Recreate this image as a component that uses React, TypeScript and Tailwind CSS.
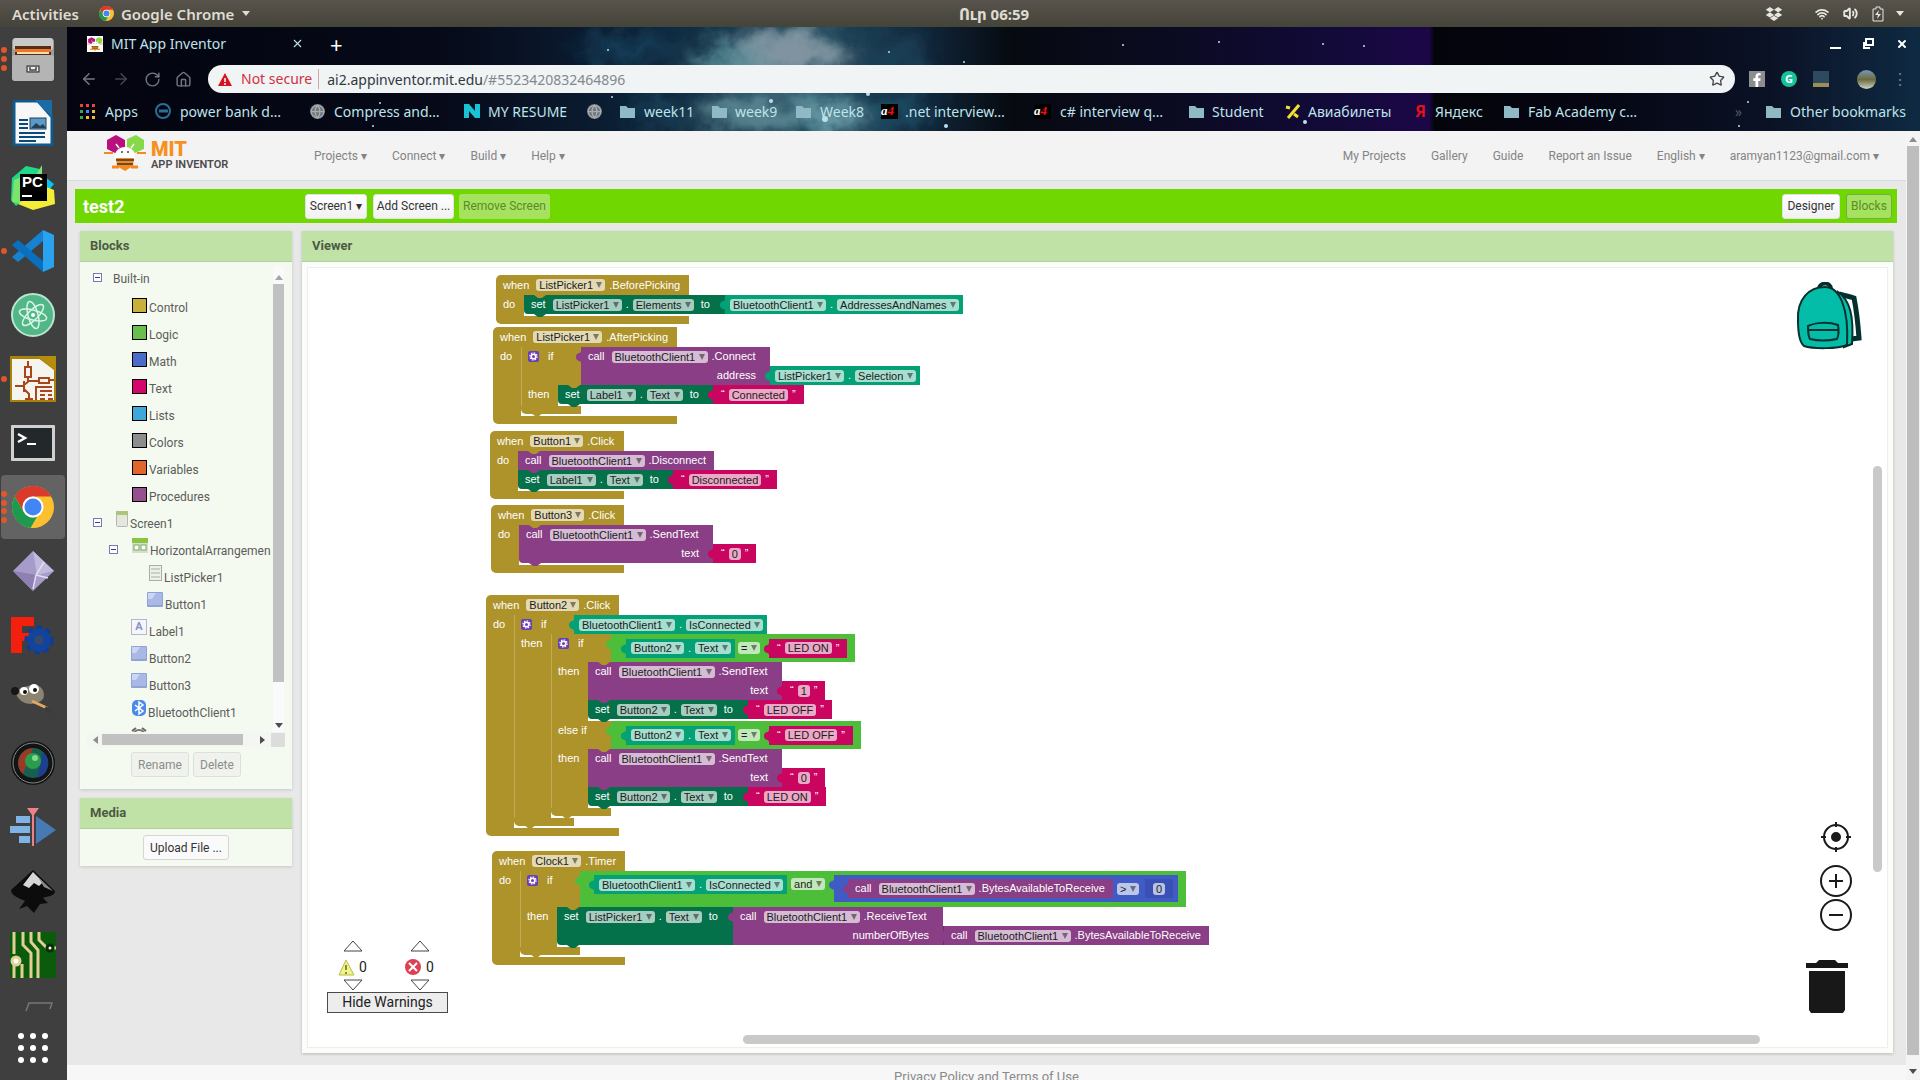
import React from 'react';
import { ArrowLeft, ArrowRight, Globe, House, RotateCw, Star, Volume2, Wifi, X } from 'lucide-react';
import { FaDropbox, FaFacebookF } from 'react-icons/fa';

/* ---------- block colours ---------- */

const tones = {
  gold: { bg: 'bg-[#ae932b]', text: 'text-[#ae932b]' },
  set: { bg: 'bg-[#04714a]', text: 'text-[#04714a]' },
  teal: { bg: 'bg-[#04a176]', text: 'text-[#04a176]' },
  purple: { bg: 'bg-[#893e85]', text: 'text-[#893e85]' },
  pink: { bg: 'bg-[#c9055f]', text: 'text-[#c9055f]' },
  green: { bg: 'bg-[#4dbe3a]', text: 'text-[#4dbe3a]' },
  blue: { bg: 'bg-[#405bc4]', text: 'text-[#405bc4]' },
};

type Tone = keyof typeof tones;

interface BoxProps {
  children?: React.ReactNode;
  className?: string;
}

/* ---------- block parts ---------- */

const Tab = ({ tone }: { tone: Tone }) => (
  <svg viewBox="0 0 5 12" className={`absolute -left-[5px] top-1 w-[5px] h-3 z-10 ${tones[tone].text}`}>
    <path d="M5 0v12C5 9 0 11 0 6s5-3 5-6z" fill="currentColor" />
  </svg>
);

const Notch = ({ tone, className = '' }: { tone: Tone; className?: string }) => (
  <svg viewBox="0 0 12 3" className={`absolute left-[10px] w-3 h-[3px] z-10 ${tones[tone].text} ${className}`}>
    <path d="M0 0h12L8 3H4z" fill="currentColor" />
  </svg>
);

const Word = ({ children, className = 'px-[7px]' }: BoxProps) => (
  <span className={`whitespace-nowrap ${className}`}>{children}</span>
);

const Pick = ({ value }: { value: string }) => (
  <span className="relative inline-flex shrink-0">
    <select
      aria-label={value}
      className="appearance-none h-3 pl-[3px] pr-3 leading-3 rounded-[3px] bg-white/65 text-[#1c1c1c]"
    >
      <option>{value}</option>
    </select>
    <svg viewBox="0 0 6 6" className="absolute right-[3px] top-[3px] w-[6px] h-[6px] pointer-events-none text-black/45">
      <path d="M0 0h6L3 6z" fill="currentColor" />
    </svg>
  </span>
);

const Prop = ({ of, name }: { of: string; name: string }) => (
  <>
    <Pick value={of} />
    <Word className="px-1">.</Word>
    <Pick value={name} />
  </>
);

const Value = ({ tone, children, className = 'h-[19px] items-center' }: BoxProps & { tone: Tone }) => (
  <div className={`relative flex shrink-0 ${tones[tone].bg} ${className}`}>
    <Tab tone={tone} />
    {children}
  </div>
);

const Getter = ({ of, name }: { of: string; name: string }) => (
  <Value tone="teal" className="h-[19px] items-center pl-[5px] pr-1">
    <Prop of={of} name={name} />
  </Value>
);

const Quoted = ({ value }: { value: string }) => (
  <Value tone="pink" className="h-[19px] items-center px-2 gap-1">
    <span>“</span>
    <input
      aria-label="text value"
      defaultValue={value}
      className="field-sizing-content h-3 px-[3px] leading-3 rounded-[3px] bg-white/65 text-[#1c1c1c]"
    />
    <span>”</span>
  </Value>
);

interface CallProps {
  of: string;
  method: string;
  arg?: string;
  className: string;
  children?: React.ReactNode;
  plug?: boolean;
  last?: boolean;
}

const Call = ({ of, method, arg, className, children, plug, last }: CallProps) => (
  <div className="flex items-end shrink-0">
    <div className={`relative bg-[#893e85] ${last ? 'rounded-bl-[4px]' : ''} ${className}`}>
      {plug ? <Tab tone="purple" /> : <Notch tone="purple" className="-bottom-[3px]" />}
      <div className="flex items-center h-[19px]">
        <Word>call</Word>
        <Pick value={of} />
        <Word className="pl-1">.{method}</Word>
      </div>
      {arg && <div className="flex items-center justify-end h-[19px] pr-[14px]">{arg}</div>}
    </div>
    {children}
  </div>
);

interface SetterProps extends BoxProps {
  of: string;
  name: string;
  last?: boolean;
}

const Setter = ({ of, name, children, className = '', last = true }: SetterProps) => (
  <div className="flex">
    <div className={`relative bg-[#04714a] ${last ? 'rounded-bl-[4px]' : ''} ${className}`}>
      <Notch tone="set" className="-bottom-[3px]" />
      <div className="flex items-center h-[19px]">
        <Word>set</Word>
        <Prop of={of} name={name} />
        <Word>to</Word>
      </div>
    </div>
    {children}
  </div>
);

const Gear = () => (
  <svg viewBox="0 0 11 11" className="w-[11px] h-[11px] shrink-0">
    <rect width="11" height="11" rx="2" fill="#6a3fb5" />
    <circle cx="5.500" cy="5.500" r="3.600" fill="none" stroke="#fff" strokeWidth="1.200" strokeDasharray="1.500 1.300" />
    <circle cx="5.500" cy="5.500" r="2.300" fill="none" stroke="#fff" strokeWidth="1.600" />
  </svg>
);

// one "if / else if" line together with its "then" statements
const Branch = ({ test, first, children }: BoxProps & { test: React.ReactNode; first?: boolean }) => (
  <>
    <div className="flex">
      <div className="w-[60px] bg-[#ae932b] border-l border-[#c3ac55]">
        <div className="flex items-center h-[19px] pl-[6px]">
          {first && <Gear />}
          <Word className={first ? 'pl-[9px]' : ''}>{first ? 'if' : 'else if'}</Word>
        </div>
      </div>
      {test}
    </div>
    <div className="flex">
      <div className="w-[37px] shrink-0 bg-[#ae932b] border-l border-[#c3ac55] pl-[6px] leading-[19px]">then</div>
      <div className="relative pb-[2px]">
        <Notch tone="gold" className="top-0" />
        {children}
      </div>
    </div>
  </>
);

const If = ({ children, foot = 'w-[60px]' }: BoxProps & { foot?: string }) => (
  <div>
    {children}
    <div className={`relative h-2 rounded-bl-[5px] bg-[#ae932b] ${foot}`}>
      <Notch tone="gold" className="-bottom-[2px]" />
    </div>
  </div>
);

interface WhenProps {
  of: string;
  event: string;
  place: string;
  width: string;
  children: React.ReactNode;
}

const When = ({ of, event, place, width, children }: WhenProps) => (
  <div className={`absolute text-[11px] text-white font-['Liberation_Sans',sans-serif] ${place}`}>
    <div className={`flex items-center h-5 rounded-tl-[5px] bg-[#ae932b] ${width}`}>
      <Word>when</Word>
      <Pick value={of} />
      <Word className="pl-1">.{event}</Word>
    </div>
    <div className="flex">
      <div className="w-7 shrink-0 bg-[#ae932b] pl-[7px] leading-[19px]">do</div>
      <div className="relative pb-[2px]">
        <Notch tone="gold" className="top-0" />
        {children}
      </div>
    </div>
    <div className={`h-2 rounded-bl-[5px] bg-[#ae932b] ${width}`} />
  </div>
);

const Compare = ({ value }: { value: string }) => (
  <Value tone="green" className="h-7 items-center pl-[15px] pr-2">
    <Getter of="Button2" name="Text" />
    <span className="pl-[3px] pr-[9px] flex">
      <Pick value="=" />
    </span>
    <Quoted value={value} />
  </Value>
);

const SendAndLabel = ({ send, label }: { send: string; label: string }) => (
  <>
    <Call of="BluetoothClient1" method="SendText" arg="text" className="w-[194px]">
      <Quoted value={send} />
    </Call>
    <Setter of="Button2" name="Text" className="w-[160px]">
      <Quoted value={label} />
    </Setter>
  </>
);

const Program = () => (
  <>
    <When of="ListPicker1" event="BeforePicking" place="left-[188px] top-[7px]" width="w-[193px]">
      <Setter of="ListPicker1" name="Elements" className="w-[201px]">
        <Getter of="BluetoothClient1" name="AddressesAndNames" />
      </Setter>
    </When>

    <When of="ListPicker1" event="AfterPicking" place="left-[185px] top-[59px]" width="w-[184px]">
      <If>
        <Branch
          first
          test={
            <Call of="BluetoothClient1" method="Connect" arg="address" className="w-[189px]" plug>
              <Getter of="ListPicker1" name="Selection" />
            </Call>
          }
        >
          <Setter of="Label1" name="Text" className="w-[155px]">
            <Quoted value="Connected" />
          </Setter>
        </Branch>
      </If>
    </When>

    <When of="Button1" event="Click" place="left-[182px] top-[163px]" width="w-[134px]">
      <Call of="BluetoothClient1" method="Disconnect" className="w-[196px]" />
      <Setter of="Label1" name="Text" className="w-[155px]">
        <Quoted value="Disconnected" />
      </Setter>
    </When>

    <When of="Button3" event="Click" place="left-[183px] top-[237px]" width="w-[133px]">
      <Call of="BluetoothClient1" method="SendText" arg="text" className="w-[194px]" last>
        <Quoted value="0" />
      </Call>
    </When>

    <When of="Button2" event="Click" place="left-[178px] top-[327px]" width="w-[133px]">
      <If>
        <Branch first test={<Getter of="BluetoothClient1" name="IsConnected" />}>
          <If>
            <Branch first test={<Compare value="LED ON" />}>
              <SendAndLabel send="1" label="LED OFF" />
            </Branch>
            <Branch test={<Compare value="LED OFF" />}>
              <SendAndLabel send="0" label="LED ON" />
            </Branch>
          </If>
        </Branch>
      </If>
    </When>

    <When of="Clock1" event="Timer" place="left-[184px] top-[583px]" width="w-[133px]">
      <If>
        <Branch
          first
          test={
            <Value tone="green" className="h-9 items-start pl-[14px] pr-2 pt-1">
              <Getter of="BluetoothClient1" name="IsConnected" />
              <span className="pl-1 pr-[9px] pt-[3px] flex">
                <Pick value="and" />
              </span>
              <Value tone="blue" className="h-[27px] items-center pl-[14px] pr-[5px]">
                <Call of="BluetoothClient1" method="BytesAvailableToReceive" className="w-[265px]" plug />
                <span className="pl-1 pr-[6px] flex">
                  <Pick value=">" />
                </span>
                <div className="flex items-center h-[19px] px-2 bg-[#3951b5]">
                  <input
                    aria-label="number"
                    defaultValue="0"
                    className="field-sizing-content h-3 px-[3px] leading-3 rounded-[3px] bg-white/65 text-[#1c1c1c]"
                  />
                </div>
              </Value>
            </Value>
          }
        >
          <Setter of="ListPicker1" name="Text" className="w-[176px]">
            <Call of="BluetoothClient1" method="ReceiveText" arg="numberOfBytes" className="w-[210px]" plug>
              <div className="border-l border-[#6d2c6b]">
                <Call of="BluetoothClient1" method="BytesAvailableToReceive" className="w-[265px]" plug />
              </div>
            </Call>
          </Setter>
        </Branch>
      </If>
    </When>
  </>
);

/* ---------- desktop ---------- */

const ChromeLogo = ({ className }: { className: string }) => (
  <svg viewBox="0 0 42 42" className={className}>
    <circle cx="21" cy="21" r="21" fill="#fbc02d" />
    <path d="M2.800 10.500A21 21 0 0 1 39.200 10.500H21A10.500 10.500 0 0 0 11.900 26.200z" fill="#d93a2b" />
    <path d="M2.800 10.500L11.900 26.200A10.500 10.500 0 0 0 25 30.700L18.500 41.900A21 21 0 0 1 2.800 10.500z" fill="#1e9a50" />
    <circle cx="21" cy="21" r="10.500" fill="#fff" />
    <circle cx="21" cy="21" r="8.500" fill="#4285f4" />
  </svg>
);

const dockIcons: { name: string; dots?: number; active?: boolean; art: React.ReactNode }[] = [
  {
    name: 'Files',
    dots: 3,
    art: (
      <>
        <rect x="2" y="2" width="42" height="43" rx="4" fill="#9d9d9d" />
        <rect x="3" y="2" width="40" height="12" rx="3" fill="#c9c9c9" />
        <rect x="5" y="10" width="36" height="9" fill="#5a2c12" />
        <rect x="5" y="13" width="36" height="3" fill="#e8782e" />
        <rect x="7" y="16" width="32" height="2" fill="#fbdcae" />
        <rect x="2" y="19" width="42" height="26" rx="3" fill="#b4b4b4" />
        <rect x="16" y="29" width="14" height="8" fill="#eee" />
        <path d="M17 30h12v6H17zM20 31v3h6v-3" fill="none" stroke="#444" strokeWidth="1.500" />
      </>
    ),
  },
  {
    name: 'LibreOffice Writer',
    art: (
      <>
        <path d="M4 1h24l14 16v28H4z" fill="#f7f7f7" stroke="#0d5a8c" strokeWidth="3" />
        <path d="M25 0h17v17z" fill="#1b6ca5" />
        <path d="M9 20h9M9 24h9M9 28h9M9 33h26M9 37h26M9 41h17" stroke="#0b4a78" strokeWidth="2" />
        <rect x="20" y="18" width="16" height="11" fill="#5b9bc7" stroke="#23405a" />
        <path d="M21 28l5-5 4 3 3-2 3 4z" fill="#23405a" />
      </>
    ),
  },
  {
    name: 'PyCharm',
    art: (
      <>
        <path d="M2 14L16 2l14 3-8 24L6 42 1 36z" fill="#21d789" />
        <path d="M32 1v12l-9 3zM4 16l10-4v28l-12-2z" fill="#7de36a" />
        <path d="M34 12l10 8-8 10z" fill="#07c3f2" />
        <path d="M34 22l10 4 1 14-22 6-15-6z" fill="#f5ec37" />
        <rect x="10" y="10" width="27" height="27" fill="#000" />
        <text x="12" y="23" fill="#fff" fontSize="15" fontWeight="bold" fontFamily="Liberation Sans, sans-serif">
          PC
        </text>
        <rect x="12" y="31" width="10" height="2" fill="#fff" />
      </>
    ),
  },
  {
    name: 'Visual Studio Code',
    dots: 1,
    art: (
      <>
        <path d="M33 2l11 5v32l-11 5z" fill="#29a3f0" />
        <path d="M33 2v11L8 34l-6-5z" fill="#1583d2" />
        <path d="M33 44V33L8 12l-6 5z" fill="#0a6fbd" />
      </>
    ),
  },
  {
    name: 'Atom',
    art: (
      <>
        <circle cx="23" cy="23" r="21" fill="#52b788" stroke="#b9e6cf" strokeWidth="2" />
        <g fill="none" stroke="#d9f5e6" strokeWidth="1.500">
          <ellipse cx="23" cy="23" rx="14" ry="5" transform="rotate(15 23 23)" />
          <ellipse cx="23" cy="23" rx="14" ry="5" transform="rotate(75 23 23)" />
          <ellipse cx="23" cy="23" rx="14" ry="5" transform="rotate(135 23 23)" />
        </g>
        <circle cx="23" cy="23" r="2" fill="#fff" />
      </>
    ),
  },
  {
    name: 'KiCad Eeschema',
    dots: 1,
    art: (
      <>
        <path d="M0 1h30l16 12v33H0z" fill="#f6f4ee" stroke="#a98208" strokeWidth="4" />
        <path d="M28 0h18v16z" fill="#b48d0b" />
        <g fill="none" stroke="#a8471c" strokeWidth="2">
          <path d="M18 5v6M15 11h6v10h-6zM18 21v4h10M29 22h10v5H29zM39 24h5M5 30h9M14 25v11M14 29l5-4M14 33l5 5v5M15 43h8M26 44V31h16M30 35h12M30 39h5M38 39h4M30 43h5M38 43h5" />
        </g>
      </>
    ),
  },
  {
    name: 'Terminal',
    art: (
      <>
        <rect x="1" y="5" width="44" height="36" rx="1" fill="#d0d0d0" />
        <rect x="4" y="8" width="38" height="30" fill="#23282a" />
        <path d="M8 14l7 4-7 4" fill="none" stroke="#fff" strokeWidth="2.500" />
        <rect x="17" y="23" width="9" height="2" fill="#fff" />
      </>
    ),
  },
  { name: 'Google Chrome', dots: 4, active: true, art: null },
  {
    name: 'Prism',
    art: (
      <>
        <path d="M23 3l21 20-21 20L3 23z" fill="#a79bc9" />
        <path d="M23 3l21 20-17 4z" fill="#c2b9de" />
        <path d="M3 23l24 4-4 16z" fill="#8f80b4" />
        <path d="M34 14l-8 13-3 14M26 27l12 3" fill="none" stroke="#e4def2" strokeWidth="1.500" />
      </>
    ),
  },
  {
    name: 'FreeCAD',
    art: (
      <>
        <path d="M1 5h23v9H12v7h9v8h-9v12H1z" fill="#f2200c" />
        <circle cx="29" cy="28" r="12" fill="none" stroke="#0d3c9b" strokeWidth="5" strokeDasharray="5 4" />
        <circle cx="29" cy="28" r="8" fill="#3a4a66" stroke="#12439f" strokeWidth="7" />
      </>
    ),
  },
  {
    name: 'GIMP',
    art: (
      <>
        <path d="M4 12c6 4 10-3 20-3 8 0 12 8 9 14-5 6-20 8-26-3z" fill="#8a8471" />
        <circle cx="5" cy="15" r="4" fill="#161616" />
        <circle cx="14" cy="15" r="4" fill="#fff" />
        <circle cx="24" cy="13" r="5" fill="#fff" />
        <circle cx="15" cy="16" r="2" fill="#111" />
        <circle cx="25" cy="14" r="2" fill="#111" />
        <path d="M22 25l15 7" stroke="#e0a864" strokeWidth="3" />
        <path d="M36 30l7 8-9-4z" fill="#3b3b3b" />
      </>
    ),
  },
  {
    name: 'Camera',
    art: (
      <>
        <circle cx="23" cy="23" r="22" fill="#141414" />
        <circle cx="23" cy="23" r="20" fill="none" stroke="#7d8a8a" />
        <circle cx="23" cy="23" r="15" fill="#17604f" />
        <path d="M23 8a15 15 0 0 0-10 26z" fill="#9c3826" />
        <path d="M33 12a15 15 0 0 1-6 26z" fill="#1d3f8f" />
        <circle cx="23" cy="21" r="8" fill="#2b9c4c" />
        <circle cx="25" cy="18" r="3" fill="#7fd98c" />
      </>
    ),
  },
  {
    name: 'Kdenlive',
    art: (
      <>
        <path d="M6 12h14v7H6zM0 22h20v7H0zM9 32h11v7H9z" fill="#7fb2e5" />
        <path d="M26 12l20 14-20 14z" fill="#457ab5" />
        <path d="M17 4h12l-5 7v31h-2V11z" fill="#ee8287" />
      </>
    ),
  },
  {
    name: 'Inkscape',
    art: (
      <>
        <path d="M23 2l22 21c0 6-9 5-12 7l5 5-8 1-6 9-7-7-8 3 6-8C8 30 1 27 1 22z" fill="#0c0c0c" />
        <path d="M23 4l10 10-4 4-5-3-5 5-6-3z" fill="#d4d6d8" />
        <path d="M28 9l15 14-9-4z" fill="#8a8d90" />
      </>
    ),
  },
  {
    name: 'KiCad Pcbnew',
    art: (
      <>
        <rect width="46" height="46" fill="#0a5c0c" />
        <g fill="none" stroke="#e3cf96" strokeWidth="3">
          <path d="M4 0v22M4 30v16M13 0v13l8 8v25M21 0v10l7 8v28M29 0v8l8 8h9M12 46V32" />
        </g>
        <circle cx="6" cy="29" r="4" fill="#fff" stroke="#e3cf96" strokeWidth="3" />
        <circle cx="40" cy="16" r="3" fill="#fff" stroke="#0b2e0b" strokeWidth="3" />
      </>
    ),
  },
];

const dotLayouts = ['', 'h-[6px]', 'h-3', 'h-6', 'h-8'];

const Dock = () => (
  <nav aria-label="Dock" className="w-[67px] shrink-0 bg-[#3f3f3f] flex flex-col items-center overflow-hidden pr-px">
    {dockIcons.map(({ name, dots = 0, active, art }) => (
      <button
        key={name}
        aria-label={name}
        className={`relative w-16 h-16 shrink-0 flex items-center justify-center rounded ${active ? 'bg-[#636363]' : ''}`}
      >
        <span className={`absolute left-0 flex flex-col justify-between ${dotLayouts[dots]}`}>
          {Array.from({ length: dots }, (_, i) => (
            <span key={i} className="w-[6px] h-[6px] rounded-full bg-[#e2562c]" />
          ))}
        </span>
        {art ? (
          <svg viewBox="0 0 46 46" className="w-[46px] h-[46px]">
            {art}
          </svg>
        ) : (
          <ChromeLogo className="w-[42px] h-[42px]" />
        )}
      </button>
    ))}
    <svg viewBox="0 0 28 10" className="w-7 h-[10px] mt-[14px] ml-3 shrink-0">
      <path d="M1 10L4 2h23l-2 6" fill="none" stroke="#777" strokeWidth="1.500" />
    </svg>
    <button aria-label="Show applications" className="grid grid-cols-3 gap-[6px] mt-[22px]">
      {Array.from({ length: 9 }, (_, i) => (
        <span key={i} className="w-[6px] h-[6px] rounded-full bg-white" />
      ))}
    </button>
  </nav>
);

const TopBar = () => (
  <header className="h-[27px] shrink-0 grid grid-cols-3 items-center px-3 bg-linear-to-b from-[#58534c] to-[#454439] text-[#dfdbd2] text-[15px] leading-5 font-semibold font-['Noto_Sans','DejaVu_Sans',sans-serif]">
    <div className="flex items-center">
      <button className="mr-5">Activities</button>
      <ChromeLogo className="w-[15px] h-[15px] mr-[7px]" />
      <button className="flex items-center">
        Google Chrome
        <span className="ml-2 border-x-4 border-t-[5px] border-x-transparent border-t-[#dfdbd2]" />
      </button>
    </div>
    <button className="justify-self-center pl-[68px] font-bold">Ուր 06:59</button>
    <div className="flex items-center justify-end pr-1 text-[#e8e6e0]">
      <FaDropbox className="w-[18px] h-4 mr-8" />
      <Wifi className="w-[14px] h-[14px] mr-[14px]" strokeWidth={3} />
      <Volume2 className="w-[15px] h-[15px] mr-[14px]" strokeWidth={3} />
      <svg viewBox="0 0 12 16" className="w-3 h-4 mr-3">
        <path d="M1 3h3V1h4v2h3v12H1z" fill="none" stroke="currentColor" />
        <path d="M7 4L3 9h3l-1 4 4-5H6z" fill="currentColor" />
      </svg>
      <span className="border-x-4 border-t-[5px] border-x-transparent border-t-[#e8e6e0]" />
    </div>
  </header>
);

/* ---------- browser ---------- */

const Nebula = () => (
  <svg viewBox="0 0 1853 104" preserveAspectRatio="none" className="absolute inset-0 w-full h-full">
    <defs>
      <linearGradient id="sky">
        <stop offset="0" stopColor="#03040f" />
        <stop offset="0.200" stopColor="#060918" />
        <stop offset="0.310" stopColor="#0c2137" />
        <stop offset="0.400" stopColor="#1d4a5e" />
        <stop offset="0.460" stopColor="#12283d" />
        <stop offset="0.510" stopColor="#060a10" />
        <stop offset="0.600" stopColor="#0b0b22" />
        <stop offset="0.680" stopColor="#120a38" />
        <stop offset="0.735" stopColor="#1c0747" />
        <stop offset="0.738" stopColor="#04040b" />
        <stop offset="0.820" stopColor="#050612" />
        <stop offset="0.920" stopColor="#0b1226" />
        <stop offset="1" stopColor="#0e2a42" />
      </linearGradient>
      <filter id="haze" x="-50%" y="-50%" width="200%" height="200%">
        <feGaussianBlur stdDeviation="11" result="soft" />
        <feTurbulence type="fractalNoise" baseFrequency="0.040" numOctaves="4" seed="7" />
        <feDisplacementMap in="soft" scale="40" xChannelSelector="R" yChannelSelector="G" />
      </filter>
    </defs>
    <rect width="1853" height="104" fill="url(#sky)" />
    <g filter="url(#haze)">
      <ellipse cx="720" cy="27" rx="62" ry="24" fill="#8296a2" />
      <ellipse cx="660" cy="36" rx="38" ry="13" fill="#5f97a0" />
      <ellipse cx="690" cy="86" rx="60" ry="18" fill="#5b8793" />
      <ellipse cx="770" cy="88" rx="36" ry="18" fill="#6fa3ad" />
      <ellipse cx="560" cy="20" rx="50" ry="14" fill="#17405a" />
      <ellipse cx="590" cy="84" rx="30" ry="10" fill="#1c4a60" />
      <ellipse cx="825" cy="30" rx="40" ry="14" fill="#1b4358" />
      <ellipse cx="820" cy="86" rx="45" ry="14" fill="#1c5068" />
    </g>
    <g fill="#b9e0ee">
      <circle cx="862" cy="40" r="2" />
      <circle cx="897" cy="35" r="1" />
      <circle cx="822" cy="25" r="1" />
      <circle cx="881" cy="55" r="1" />
      <circle cx="879" cy="99" r="2" />
      <circle cx="801" cy="67" r="2" />
      <circle cx="758" cy="92" r="3" />
      <circle cx="704" cy="74" r="2" />
      <circle cx="1056" cy="18" r="1" />
      <circle cx="1152" cy="15" r="1" />
      <circle cx="1256" cy="17" r="1" />
      <circle cx="1297" cy="19" r="1" />
      <circle cx="1238" cy="95" r="2" />
      <circle cx="1672" cy="99" r="1" />
      <circle cx="1681" cy="75" r="1" />
      <circle cx="306" cy="99" r="1" />
      <circle cx="313" cy="76" r="1" />
      <circle cx="541" cy="23" r="1" />
      <circle cx="545" cy="70" r="1" />
    </g>
  </svg>
);

const Folder = () => (
  <svg viewBox="0 0 15 13" className="w-[15px] h-[13px]">
    <path d="M0 1h6l2 2h7v10H0z" fill="#8fb9c4" />
  </svg>
);

const Earth = () => (
  <span className="w-[15px] h-[15px] rounded-full bg-[#70777c] flex">
    <Globe className="w-[15px] h-[15px] text-[#a5adb1]" strokeWidth={2} />
  </span>
);

const A4 = () => (
  <span className="w-[17px] h-[15px] bg-black text-white text-[13px] leading-[14px] font-bold italic font-['Liberation_Serif',serif]">
    a<span className="text-[#ee1111]">4</span>
  </span>
);

const AppsGrid = () => (
  <svg viewBox="0 0 15 15" className="w-[15px] h-[15px]">
    {['#e8453c', '#e8453c', '#e8453c', '#39a852', '#4285f4', '#f9bb2d', '#39a852', '#f9bb2d', '#f9bb2d'].map((c, i) => (
      <rect key={i} x={(i % 3) * 6} y={Math.floor(i / 3) * 6} width="3" height="3" fill={c} />
    ))}
  </svg>
);

const bookmarks: { label: string; width: string; gap: string; icon: React.ReactNode }[] = [
  { label: 'Apps', width: 'w-[75px]', gap: 'gap-[10px]', icon: <AppsGrid /> },
  {
    label: 'power bank d…',
    width: 'w-[155px]',
    gap: 'gap-2',
    icon: (
      <svg viewBox="0 0 17 17" className="w-[17px] h-[17px]">
        <circle cx="8" cy="8" r="7" fill="none" stroke="#2a6f95" strokeWidth="2" />
        <path d="M4 8h9" stroke="#2a6f95" strokeWidth="3" />
      </svg>
    ),
  },
  { label: 'Compress and…', width: 'w-[154px]', gap: 'gap-[9px]', icon: <Earth /> },
  {
    label: 'MY RESUME',
    width: 'w-[123px]',
    gap: 'gap-2',
    icon: (
      <svg viewBox="0 0 16 14" className="w-4 h-[14px]">
        <path d="M0 14V0h5l6 7V0h5v14h-5L5 7v7z" fill="#19c3d6" />
      </svg>
    ),
  },
  { label: '', width: 'w-[33px]', gap: '', icon: <Earth /> },
  { label: 'week11', width: 'w-[92px]', gap: 'gap-[9px]', icon: <Folder /> },
  { label: 'week9', width: 'w-[84px]', gap: 'gap-2', icon: <Folder /> },
  { label: 'Week8', width: 'w-[85px]', gap: 'gap-[9px]', icon: <Folder /> },
  { label: '.net interview…', width: 'w-[153px]', gap: 'gap-[7px]', icon: <A4 /> },
  { label: 'c# interview q…', width: 'w-[155px]', gap: 'gap-[9px]', icon: <A4 /> },
  { label: 'Student', width: 'w-[96px]', gap: 'gap-2', icon: <Folder /> },
  {
    label: 'Авиабилеты',
    width: 'w-[130px]',
    gap: 'gap-2',
    icon: (
      <svg viewBox="0 0 15 15" className="w-[15px] h-[15px]">
        <path d="M1 3l4 1M3 14L14 1M9 10l4 3" stroke="#f0e030" strokeWidth="3" />
      </svg>
    ),
  },
  {
    label: 'Яндекс',
    width: 'w-[89px]',
    gap: 'gap-[10px]',
    icon: <span className="w-[10px] text-[16px] font-bold text-[#e0101c]">Я</span>,
  },
  { label: 'Fab Academy c…', width: 'w-[150px]', gap: 'gap-[9px]', icon: <Folder /> },
];

const AppLogo = ({ className }: { className: string }) => (
  <svg viewBox="0 0 42 36" className={className}>
    <path d="M3 5L12 0l9 5v9l-8 5-10-5z" fill="#b8107d" />
    <path d="M23 4l9-4 8 5v9l-9 4-8-4z" fill="#88d94a" />
    <path d="M0 18h9M33 18h9" stroke="#f28a1c" strokeWidth="2" />
    <path d="M15 13l-3-4M27 13l3-4" stroke="#fff" strokeWidth="1.500" />
    <path d="M12 22h18l-1 9-8 5-8-5z" fill="#f28a1c" />
    <path d="M8 32h7M27 32h7" stroke="#f28a1c" strokeWidth="3" />
    <path d="M12 25h18M13 29h16" stroke="#6b4a34" strokeWidth="2" />
    <path d="M11 23c-1-7 4-11 10-11s11 4 10 11z" fill="#fff" />
    <circle cx="18" cy="17" r="1" fill="#444" />
    <circle cx="24" cy="17" r="1" fill="#444" />
  </svg>
);

const Browser = () => (
  <div className="relative h-[104px] shrink-0 bg-[#05060f] text-[#bfe3ec] text-[14px] font-['Noto_Sans',sans-serif]">
    <Nebula />
    <div className="relative flex flex-col h-full">
      <div className="h-[38px] flex items-center pl-5 pb-[5px]">
        <span className="w-4 h-4 mr-2 bg-white flex items-center justify-center">
          <AppLogo className="w-4 h-[14px]" />
        </span>
        <span className="w-[180px]">MIT App Inventor</span>
        <button aria-label="Close tab">
          <X className="w-[13px] h-[13px]" />
        </button>
        <button aria-label="New tab" className="ml-[26px] text-[22px] leading-none text-white">
          +
        </button>
        <div className="ml-auto flex items-center gap-[22px] pr-3 text-white">
          <button aria-label="Minimize" className="w-[11px] h-[2px] mt-2 bg-white" />
          <button aria-label="Restore">
            <svg viewBox="0 0 11 11" className="w-[11px] h-[11px]">
              <path d="M3 1h7v6H3zM1 4v6h6" fill="none" stroke="currentColor" strokeWidth="2" />
            </svg>
          </button>
          <button aria-label="Close window">
            <X className="w-3 h-3" strokeWidth={4} />
          </button>
        </div>
      </div>
      <div className="h-7 flex items-center pl-[13px] pr-3">
        <div className="flex items-center gap-[14px] text-[#75787f] mr-4">
          <ArrowLeft className="w-[18px] h-[18px]" />
          <ArrowRight className="w-[18px] h-[18px] text-[#43464d]" />
          <RotateCw className="w-[17px] h-[17px]" />
          <House className="w-[17px] h-[17px]" />
        </div>
        <div className="flex-1 h-7 rounded-full bg-[#f0f4f5] flex items-center pl-[10px] pr-[10px]">
          <svg viewBox="0 0 14 13" className="w-[14px] h-[13px] mr-[9px]">
            <path d="M7 0l7 13H0z" fill="#d6121f" />
            <path d="M7 5v4M7 10v2" stroke="#fff" strokeWidth="1.500" />
          </svg>
          <span className="text-[#d23040] pr-[6px] mr-2 border-r border-[#d9a5aa] leading-5">Not secure</span>
          <label className="relative flex-1 flex">
            <span className="text-[#33383d]">
              ai2.appinventor.mit.edu<span className="text-[#83888d]">/#5523420832464896</span>
            </span>
            <input
              aria-label="Address"
              defaultValue="ai2.appinventor.mit.edu/#5523420832464896"
              className="absolute inset-0 w-full bg-transparent text-transparent"
            />
          </label>
          <Star className="w-4 h-4 text-[#444]" />
        </div>
        <span className="ml-[14px] w-4 h-4 bg-[#8d8d90] flex items-end justify-center text-white">
          <FaFacebookF className="w-3 h-[14px]" />
        </span>
        <span className="ml-4 w-4 h-4 rounded-full bg-[#14c39a] text-white text-[11px] leading-4 text-center font-bold">G</span>
        <span className="ml-4 w-4 h-4 bg-[#2d4a60] border-b-4 border-[#9c8e50]" />
        <span className="ml-7 w-[19px] h-[19px] rounded-full bg-linear-to-b from-[#7a95b8] via-[#6c6c3a] to-[#cfd6d0]" />
        <button aria-label="Menu" className="ml-4 text-[16px] leading-none text-[#777c85]">
          ⋮
        </button>
      </div>
      <div className="h-[38px] flex items-center pl-[13px] pr-[14px] pb-[2px]">
        {bookmarks.map(({ label, width, gap, icon }, i) => (
          <a key={i} href="#" aria-label={label || 'Bookmark'} className={`flex items-center shrink-0 whitespace-nowrap ${gap} ${width}`}>
            {icon}
            {label}
          </a>
        ))}
        <span className="ml-auto mr-6 text-[#4f5966]">»</span>
        <a href="#" className="flex items-center gap-[9px] whitespace-nowrap">
          <Folder />
          Other bookmarks
        </a>
      </div>
    </div>
  </div>
);

/* ---------- App Inventor page ---------- */

const button = 'h-[25px] rounded-[3px] text-[12px] whitespace-nowrap flex items-center justify-center';
const whiteButton = `${button} bg-linear-to-b from-white to-[#f1f1f1] text-[#333] border border-[#e2e2e2]`;

const PageHeader = () => (
  <header className="h-[50px] shrink-0 flex items-center bg-[#f3f3f3] border-b border-[#d5dbde] pl-[37px] pr-[27px] text-[12px] text-[#848484]">
    <AppLogo className="w-[42px] h-9 mb-[6px] mr-[5px]" />
    <div className="w-[163px]">
      <div className="text-[20px] leading-[18px] font-black text-[#f7901e]">MIT</div>
      <div className="text-[11px] leading-[14px] font-semibold text-[#4b4b4b]">APP INVENTOR</div>
    </div>
    <nav className="flex gap-[25px]">
      <button>Projects ▾</button>
      <button>Connect ▾</button>
      <button>Build ▾</button>
      <button>Help ▾</button>
    </nav>
    <nav className="flex gap-[25px] ml-auto">
      <a href="#">My Projects</a>
      <a href="#">Gallery</a>
      <a href="#">Guide</a>
      <a href="#">Report an Issue</a>
      <button>English ▾</button>
      <button>aramyan1123@gmail.com ▾</button>
    </nav>
  </header>
);

const ProjectBar = () => (
  <div className="h-[34px] shrink-0 flex items-center bg-[#70d800] pl-2 pr-[5px]">
    <h1 className="w-[222px] text-[18px] font-bold text-white">test2</h1>
    <button className={`${whiteButton} w-[62px]`}>Screen1 ▾</button>
    <button className={`${whiteButton} w-[81px] ml-[6px]`}>Add Screen ...</button>
    <button disabled className={`${button} w-[91px] ml-[5px] bg-[#a5e25e] text-[#5c8a2c]`}>
      Remove Screen
    </button>
    <button className={`${whiteButton} w-[58px] ml-auto`}>Designer</button>
    <button disabled className={`${button} w-[46px] ml-[6px] bg-[#a5e25e] border border-[#7aa84a] text-[#5c8a2c]`}>
      Blocks
    </button>
  </div>
);

const PanelTitle = ({ children }: BoxProps) => (
  <h2 className="h-[31px] shrink-0 flex items-center px-[10px] bg-[#c1e2a7] border-b border-[#b3cfa0] text-[13px] font-bold text-[#4c5a44]">
    {children}
  </h2>
);

const Minus = () => (
  <button aria-label="Collapse" className="w-[9px] h-[9px] mt-[7px] border border-[#7d78b5] bg-white flex items-center justify-center">
    <span className="w-[5px] h-px bg-[#3d378f]" />
  </button>
);

const swatch = 'w-[15px] h-[15px] mt-[3px] border border-black';

const ScreenIcon = () => (
  <svg viewBox="0 0 12 16" className="w-3 h-4">
    <rect x="0.500" y="0.500" width="11" height="15" rx="1" fill="#e4e6e0" stroke="#b5b9ae" />
    <rect width="12" height="4" fill="#a8c878" />
  </svg>
);
const ArrangementIcon = () => (
  <svg viewBox="0 0 16 16" className="w-4 h-4">
    <rect width="16" height="15" fill="#d5ded0" />
    <rect width="16" height="5" fill="#8bc53f" />
    <rect x="2" y="7" width="5" height="5" fill="#fff" stroke="#7da85a" />
    <rect x="9" y="7" width="5" height="5" fill="#fff" stroke="#7da85a" />
  </svg>
);
const ListIcon = () => (
  <svg viewBox="0 0 13 16" className="w-[13px] h-4">
    <rect x="0.500" y="0.500" width="12" height="15" fill="#eef1ea" stroke="#a9ada5" />
    <path d="M2 4h9M2 8h9M2 12h9" stroke="#a9ada5" />
  </svg>
);
const ButtonIcon = () => (
  <svg viewBox="0 0 16 15" className="w-4 h-[15px]">
    <rect width="16" height="15" rx="1" fill="#8fa3d6" />
    <rect x="1" y="1" width="14" height="12" fill="#a9b8e4" />
    <path d="M1 1h8L5 7H1z" fill="#ccd6f2" />
  </svg>
);
const LabelIcon = () => (
  <span className="w-4 h-4 border border-[#b4b8c8] bg-[#f4f6fc] text-[11px] leading-[14px] text-center font-bold text-[#8d90c4]">A</span>
);
const BluetoothIcon = () => (
  <svg viewBox="0 0 14 16" className="w-[14px] h-4">
    <rect width="14" height="16" rx="5" fill="#4a8ae8" />
    <path d="M3 5l8 6-4 3V2l4 3-8 6" fill="none" stroke="#fff" strokeWidth="1.500" />
  </svg>
);
const ClockIcon = () => (
  <svg viewBox="0 0 16 16" className="w-4 h-4">
    <circle cx="8" cy="9" r="6" fill="#fff" stroke="#777" strokeWidth="2" />
    <path d="M1 4l4-3M15 4l-4-3" stroke="#666" strokeWidth="2" />
  </svg>
);

const blockTree: { label: string; indent: string; icon?: React.ReactNode; open?: boolean }[] = [
  { label: 'Built-in', indent: 'pl-[13px]', open: true },
  { label: 'Control', indent: 'pl-[52px]', icon: <span className={`${swatch} bg-[#c9b03c]`} /> },
  { label: 'Logic', indent: 'pl-[52px]', icon: <span className={`${swatch} bg-[#68bf4c]`} /> },
  { label: 'Math', indent: 'pl-[52px]', icon: <span className={`${swatch} bg-[#4a6cc8]`} /> },
  { label: 'Text', indent: 'pl-[52px]', icon: <span className={`${swatch} bg-[#d4056c]`} /> },
  { label: 'Lists', indent: 'pl-[52px]', icon: <span className={`${swatch} bg-[#40a8d8]`} /> },
  { label: 'Colors', indent: 'pl-[52px]', icon: <span className={`${swatch} bg-[#8d8d8d]`} /> },
  { label: 'Variables', indent: 'pl-[52px]', icon: <span className={`${swatch} bg-[#e0662c]`} /> },
  { label: 'Procedures', indent: 'pl-[52px]', icon: <span className={`${swatch} bg-[#94508f]`} /> },
  { label: 'Screen1', indent: 'pl-[13px]', icon: <ScreenIcon />, open: true },
  { label: 'HorizontalArrangemen', indent: 'pl-[29px]', icon: <ArrangementIcon />, open: true },
  { label: 'ListPicker1', indent: 'pl-[69px]', icon: <ListIcon /> },
  { label: 'Button1', indent: 'pl-[67px]', icon: <ButtonIcon /> },
  { label: 'Label1', indent: 'pl-[51px]', icon: <LabelIcon /> },
  { label: 'Button2', indent: 'pl-[51px]', icon: <ButtonIcon /> },
  { label: 'Button3', indent: 'pl-[51px]', icon: <ButtonIcon /> },
  { label: 'BluetoothClient1', indent: 'pl-[52px]', icon: <BluetoothIcon /> },
  { label: '', indent: 'pl-[51px]', icon: <ClockIcon /> },
];

const Sidebar = () => (
  <aside className="w-[212px] shrink-0 flex flex-col gap-[9px]">
    <section className="bg-[#f4faef] shadow-[0_1px_3px_rgba(0,0,0,0.15)]">
      <PanelTitle>Blocks</PanelTitle>
      <div className="flex h-[470px]">
        <ul className="flex-1 min-w-0 overflow-hidden pt-1 text-[12px] text-[#5c5c5c]">
          {blockTree.map(({ label, indent, icon, open }) => (
            <li key={label} className={`flex items-start h-[27px] first:mb-[2px] leading-[27px] whitespace-nowrap ${indent}`}>
              {open && <Minus />}
              {open && <span className={icon ? 'w-[14px] shrink-0' : 'w-[11px] shrink-0'} />}
              {icon && <span className="mr-[2px] flex shrink-0">{icon}</span>}
              {label}
            </li>
          ))}
        </ul>
        <div className="w-[11px] mr-2 mt-1 bg-[#fafafa] flex flex-col items-center">
          <span className="mt-[9px] mb-1 border-x-4 border-b-[5px] border-x-transparent border-b-[#a5a5a5]" />
          <span className="w-full h-[398px] bg-[#c1c1c1]" />
          <span className="mt-auto mb-1 border-x-4 border-t-[5px] border-x-transparent border-t-[#4d4d4d]" />
        </div>
      </div>
      <div className="flex items-center h-[15px] mx-[7px] pl-[6px] bg-[#f4f6f2]">
        <span className="border-y-4 border-r-[5px] border-y-transparent border-r-[#8d8d8d]" />
        <span className="w-[141px] h-[11px] ml-[4px] bg-[#c1c1c1]" />
        <span className="ml-auto mr-[6px] border-y-4 border-l-[5px] border-y-transparent border-l-[#4d4d4d]" />
        <span className="w-[14px] h-[14px] bg-[#dcdcdc]" />
      </div>
      <div className="flex justify-center gap-1 pt-[5px] pb-3">
        <button disabled className={`${button} w-[58px] bg-[#f0f2ee] border border-[#dde0da] text-[#8c8c8c]`}>
          Rename
        </button>
        <button disabled className={`${button} w-12 bg-[#f0f2ee] border border-[#dde0da] text-[#8c8c8c]`}>
          Delete
        </button>
      </div>
    </section>
    <section className="bg-[#f4faef] shadow-[0_1px_3px_rgba(0,0,0,0.15)]">
      <PanelTitle>Media</PanelTitle>
      <div className="flex justify-center py-[6px]">
        <button className={`${button} w-[86px] bg-[#fafafa] border border-[#d5d5d5] text-[#333]`}>Upload File ...</button>
      </div>
    </section>
  </aside>
);

const Backpack = () => (
  <svg viewBox="0 0 66 68" className="w-[66px] h-[68px]">
    <path d="M43 12c8 2 12 3 15 4 2 10 4 26 5 40l-8 1" fill="none" stroke="#06302d" strokeWidth="5" />
    <path d="M42 10c12 8 16 24 14 52l-8 3z" fill="#04bda9" stroke="#06302d" strokeWidth="2" />
    <path d="M23 6c1-6 12-6 12 1" fill="none" stroke="#06302d" strokeWidth="4" />
    <path d="M2 38C1 17 13 5 29 5c15 0 24 22 22 58-9 4-34 4-43 1-5-4-6-14-6-26z" fill="#04bda9" stroke="#06302d" strokeWidth="2" />
    <path d="M12 44c8-4 22-4 30-1 1 6 1 10-1 14-8 2-20 2-27 0-2-3-2-8-2-13zM13 48h29" fill="none" stroke="#06302d" strokeWidth="2" />
  </svg>
);

const ViewerControls = () => (
  <>
    <button aria-label="Backpack" className="absolute right-[25px] top-[14px]">
      <Backpack />
    </button>
    <div className="absolute right-[35px] bottom-[34px] flex flex-col items-end">
      <button aria-label="Center blocks">
        <svg viewBox="0 0 32 32" className="w-8 h-8" stroke="#1a1a1a" strokeWidth="2">
          <circle cx="16" cy="16" r="12" fill="none" />
          <circle cx="16" cy="16" r="4" fill="#1a1a1a" />
          <path d="M16 1v5M16 26v5M1 16h5M26 16h5" />
        </svg>
      </button>
      <button aria-label="Zoom in" className="mt-3">
        <svg viewBox="0 0 32 32" className="w-8 h-8" fill="none" stroke="#1a1a1a" strokeWidth="2">
          <circle cx="16" cy="16" r="15" />
          <path d="M9 16h14M16 9v14" />
        </svg>
      </button>
      <button aria-label="Zoom out" className="mt-[2px]">
        <svg viewBox="0 0 32 32" className="w-8 h-8" fill="none" stroke="#1a1a1a" strokeWidth="2">
          <circle cx="16" cy="16" r="15" />
          <path d="M9 16h14" />
        </svg>
      </button>
      <button aria-label="Trash" className="mt-7 mr-1">
        <svg viewBox="0 0 42 54" className="w-[42px] h-[54px]" fill="#181818">
          <path d="M0 4h10l3-3h16l3 3h10v5H0zM3 12h36v39l-2 3H5l-2-3z" />
        </svg>
      </button>
    </div>
  </>
);

const Triangle = ({ label, down }: { label: string; down?: boolean }) => (
  <button aria-label={label}>
    <svg viewBox="0 0 20 12" className={`w-5 h-3 ${down ? 'rotate-180' : ''}`}>
      <path d="M10 1l9 10H1z" fill="#fff" stroke="#444" />
    </svg>
  </button>
);

const Warnings = () => (
  <div className="absolute left-[19px] bottom-[34px] text-[14px] text-[#222]">
    <div className="flex gap-10 pl-3 mb-px">
      <div className="flex flex-col items-center w-[27px]">
        <Triangle label="Previous warning" />
        <div className="flex items-center gap-1 h-[27px] pt-1">
          <svg viewBox="0 0 17 17" className="w-[17px] h-[17px]">
            <path d="M8 1l8 15H1z" fill="#f1f48c" stroke="#b9bc4a" />
            <path d="M8 6v5M8 13v2" stroke="#8a8c2a" strokeWidth="2" />
          </svg>
          0
        </div>
        <Triangle label="Next warning" down />
      </div>
      <div className="flex flex-col items-center w-[27px]">
        <Triangle label="Previous error" />
        <div className="flex items-center gap-1 h-[27px] pt-1">
          <svg viewBox="0 0 17 17" className="w-[17px] h-[17px]">
            <circle cx="8" cy="8" r="8" fill="#dd4050" />
            <path d="M4 4l8 8M12 4l-8 8" stroke="#fff" strokeWidth="2" />
          </svg>
          0
        </div>
        <Triangle label="Next error" down />
      </div>
    </div>
    <button className="w-[121px] h-[21px] border border-[#4a4a4a] bg-[#ededed] leading-[19px]">Hide Warnings</button>
  </div>
);

const Viewer = () => (
  <section className="flex-1 min-w-0 flex flex-col bg-[#fbfdf9] shadow-[0_1px_3px_rgba(0,0,0,0.2)]">
    <PanelTitle>Viewer</PanelTitle>
    <div className="relative flex-1 m-[6px] bg-white ring-1 ring-[#eeeeee]">
      <Program />
      <ViewerControls />
      <Warnings />
      <span className="absolute right-[5px] top-[198px] w-[9px] h-[406px] rounded-full bg-[#c9c9c9]" />
      <span className="absolute left-[435px] right-[127px] bottom-[3px] h-[9px] rounded-full bg-[#c9c9c9]" />
    </div>
  </section>
);

const App: React.FC = () => (
  <div className="h-screen flex flex-col overflow-hidden">
    <TopBar />
    <div className="flex-1 min-h-0 flex">
      <Dock />
      <div className="flex-1 min-w-0 flex flex-col">
        <Browser />
        <div className="flex-1 min-h-0 flex bg-[#e8e8e8] font-['Roboto',sans-serif]">
          <div className="flex-1 min-w-0 flex flex-col">
            <PageHeader />
            <div className="flex-1 min-h-0 flex flex-col pt-2 pl-2 pr-[9px] pb-3">
              <ProjectBar />
              <main className="flex-1 min-h-0 flex items-stretch gap-[10px] pt-2 pl-[5px] pr-1">
                <Sidebar />
                <Viewer />
              </main>
            </div>
            <footer className="h-[15px] shrink-0 overflow-hidden bg-[#f7f7f7] pt-[2px] text-center text-[13px] leading-5 text-[#8a8a8a]">
              <a href="#">Privacy Policy and Terms of Use</a>
            </footer>
          </div>
          <div className="w-[14px] shrink-0 bg-[#f4f4f4] flex flex-col items-center">
            <span className="mt-[6px] mb-1 border-x-4 border-b-[5px] border-x-transparent border-b-[#8d8d8d]" />
            <span className="w-3 flex-1 bg-[#bdbdbd]" />
            <span className="mt-[14px] mb-[6px] border-x-4 border-t-[5px] border-x-transparent border-t-[#4d4d4d]" />
          </div>
        </div>
      </div>
    </div>
  </div>
);

export default App;
